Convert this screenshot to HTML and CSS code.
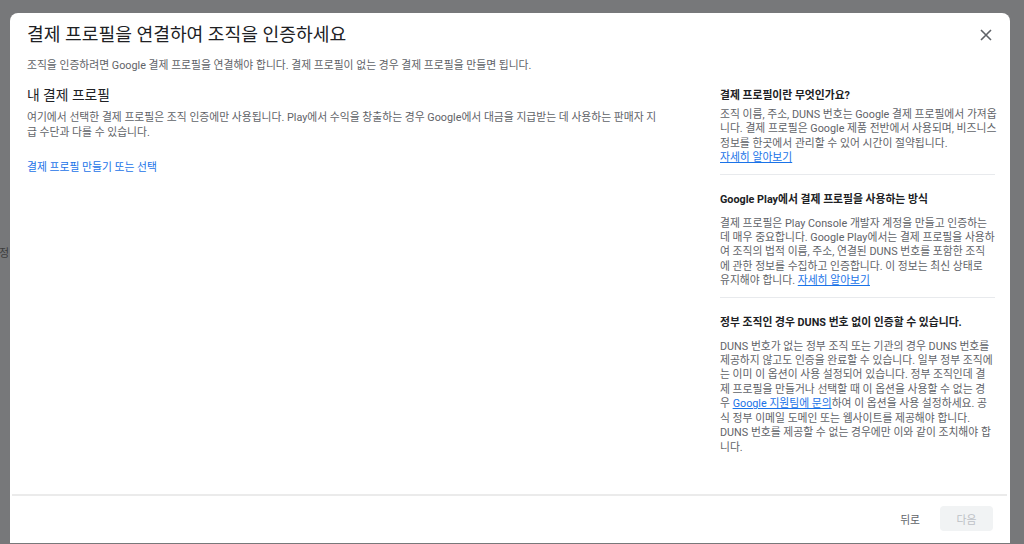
FILE: index.html
```html
<!DOCTYPE html>
<html lang="ko">
<head>
    <meta charset="UTF-8">
    <meta name="viewport" content="width=device-width, initial-scale=1.0">
    <title>결제 프로필 연결</title>
    <link rel="stylesheet" href="styles.css">
</head>
<body>
    <div class="backdrop">
        <span class="peek">정</span>
    </div>

    <div class="dialog">
        <div class="dialog-header">
            <h1>결제 프로필을 연결하여 조직을 인증하세요</h1>
            <button class="close" type="button" aria-label="닫기">
                <svg width="12" height="12" viewBox="0 0 12 12"><path d="M1 1L11 11M11 1L1 11" stroke="#5f6368" stroke-width="1.6" fill="none"/></svg>
            </button>
        </div>
        <p class="subtitle">조직을 인증하려면 Google 결제 프로필을 연결해야 합니다. 결제 프로필이 없는 경우 결제 프로필을 만들면 됩니다.</p>

        <div class="dialog-body">
            <div class="main">
                <h2>내 결제 프로필</h2>
                <p class="desc">여기에서 선택한 결제 프로필은 조직 인증에만 사용됩니다. Play에서 수익을 창출하는 경우 Google에서 대금을 지급받는 데 사용하는 판매자 지급 수단과 다를 수 있습니다.</p>
                <a class="action" href="#">결제 프로필 만들기 또는 선택</a>
            </div>

            <aside class="side">
                <section class="info">
                    <h3>결제 프로필이란 무엇인가요?</h3>
                    <p>조직 이름, 주소, DUNS 번호는 Google 결제 프로필에서 가져옵니다. 결제 프로필은 Google 제품 전반에서 사용되며, 비즈니스 정보를 한곳에서 관리할 수 있어 시간이 절약됩니다. <a class="block-link" href="#">자세히 알아보기</a></p>
                </section>
                <section class="info">
                    <h3>Google Play에서 결제 프로필을 사용하는 방식</h3>
                    <p>결제 프로필은 Play Console 개발자 계정을 만들고 인증하는 데 매우 중요합니다. Google Play에서는 결제 프로필을 사용하여 조직의 법적 이름, 주소, 연결된 DUNS 번호를 포함한 조직에 관한 정보를 수집하고 인증합니다. 이 정보는 최신 상태로 유지해야 합니다. <a href="#">자세히 알아보기</a></p>
                </section>
                <section class="info">
                    <h3>정부 조직인 경우 DUNS 번호 없이 인증할 수 있습니다.</h3>
                    <p>DUNS 번호가 없는 정부 조직 또는 기관의 경우 DUNS 번호를 제공하지 않고도 인증을 완료할 수 있습니다. 일부 정부 조직에는 이미 이 옵션이 사용 설정되어 있습니다. 정부 조직인데 결제 프로필을 만들거나 선택할 때 이 옵션을 사용할 수 없는 경우 <a href="#">Google 지원팀에 문의</a>하여 이 옵션을 사용 설정하세요. 공식 정부 이메일 도메인 또는 웹사이트를 제공해야 합니다. DUNS 번호를 제공할 수 없는 경우에만 이와 같이 조치해야 합니다.</p>
                </section>
            </aside>
        </div>

        <div class="dialog-footer">
            <button class="btn-text" type="button">뒤로</button>
            <button class="btn-next" type="button" disabled>다음</button>
        </div>
    </div>
</body>
</html>
```

FILE: styles.css
```css
* {
    box-sizing: border-box;
}
html, body {
    margin: 0;
    height: 100%;
    overflow: hidden;
}
body {
    font-family: Roboto, "Noto Sans CJK KR", sans-serif;
    background-color: #77787a;
    color: #202124;
    position: relative;
}
.backdrop {
    position: absolute;
    inset: 0;
    background-color: #77787a;
}
.peek {
    position: absolute;
    left: -1px;
    top: 244px;
    font-size: 11px;
    color: #3c3c3c;
}
.dialog {
    position: absolute;
    left: 10px;
    top: 13px;
    width: 1000px;
    height: 530px;
    background-color: #FFFFFF;
    border-radius: 8px 8px 0 0;
    display: flex;
    flex-direction: column;
    padding: 0 15px 0 17px;
}
.dialog-header {
    display: flex;
    align-items: center;
    justify-content: space-between;
    padding-top: 9px;
}
h1 {
    margin: 0;
    font-size: 18.2px;
    font-weight: 400;
    line-height: 25px;
    color: #202124;
}
.close {
    background: none;
    border: none;
    padding: 0;
    margin-right: 3px;
    width: 12px;
    height: 12px;
    display: flex;
    cursor: pointer;
}
.subtitle {
    margin: 11px 0 0;
    font-size: 10.8px;
    line-height: 15px;
    color: #5f6368;
}
.dialog-body {
    flex: 1;
    display: grid;
    grid-template-columns: 1fr 275px;
    column-gap: 47px;
    margin-top: 12px;
}
h2 {
    margin: 0;
    font-size: 13.8px;
    font-weight: 400;
    line-height: 20px;
    color: #202124;
}
.desc {
    margin: 5px 0 0;
    font-size: 10.8px;
    line-height: 15px;
    color: #5f6368;
    max-width: 636px;
}
.action {
    display: inline-block;
    margin-top: 20px;
    font-size: 10.8px;
    line-height: 15px;
    color: #1a73e8;
    text-decoration: none;
}
.side {
    margin-top: 3px;
}
.info {
    padding-bottom: 8px;
    border-bottom: 1px solid #e8eaed;
    margin-bottom: 17px;
}
.info:last-child {
    border-bottom: none;
}
h3 {
    margin: 0;
    font-size: 10.8px;
    font-weight: 700;
    line-height: 15px;
    color: #202124;
}
.info p {
    margin: 10px 0 0;
    font-size: 10.8px;
    line-height: 14.4px;
    color: #5f6368;
}
.info:first-child p {
    margin: 5px -2px 0 0;
}
.info a {
    color: #1a73e8;
    text-decoration: underline;
}
.info a.block-link {
    display: block;
}
.dialog-footer {
    border-top: 2px solid #ebebeb;
    margin: 0 -12px 0 -15px;
    height: 49px;
    display: flex;
    align-items: center;
    justify-content: flex-end;
    gap: 20px;
    padding-right: 14px;
    padding-bottom: 2px;
}
.btn-text {
    background: none;
    border: none;
    font-family: inherit;
    font-size: 10.8px;
    color: #5f6368;
    padding: 0;
}
.btn-next {
    background-color: #f1f3f4;
    border: none;
    border-radius: 4px;
    width: 53px;
    height: 25px;
    font-family: inherit;
    font-size: 10.8px;
    color: #bdc1c6;
}
```
